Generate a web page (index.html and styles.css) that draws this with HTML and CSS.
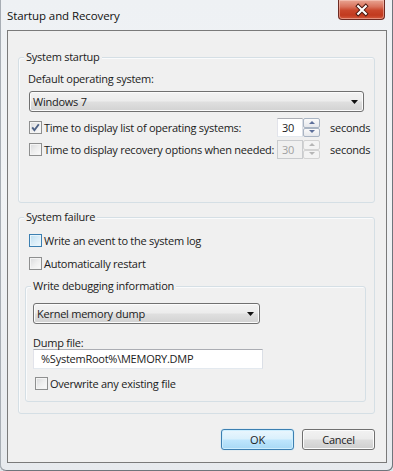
FILE: index.html
```html
<!DOCTYPE html>
<html>
<head>
<meta charset="utf-8">
<link rel="stylesheet" href="styles.css">
</head>
<body>
<div class="window">
  <div class="titlebar">
    <span class="title">Startup and Recovery</span>
    <div class="close">
      <svg width="47" height="20" viewBox="0 0 47 20">
        <path d="M20 6 L28 14 M28 6 L20 14" stroke="#4a1810" stroke-width="4.2" stroke-linecap="square" fill="none"/>
        <path d="M20 6 L28 14 M28 6 L20 14" stroke="#ffffff" stroke-width="2.2" stroke-linecap="square" fill="none"/>
      </svg>
    </div>
  </div>
  <div class="client">
    <div class="group g1">
      <span class="legend">System startup</span>
      <div class="label l-default">Default operating system:</div>
      <div class="combo c-os">
        <span>Windows 7</span>
        <svg class="arrow" width="7" height="4" viewBox="0 0 7 4"><path d="M0 0 H7 L3.5 4 Z" fill="#111"/></svg>
      </div>
      <div class="row r1">
        <div class="check-label wide">
          <span class="cb"><svg width="11" height="11" viewBox="0 0 11 11"><path d="M2.2 5.4 L4.4 8.2 L8.8 2.2" stroke="#4d6185" stroke-width="1.9" fill="none"/></svg></span>
          <span>Time to display list of operating systems:</span>
        </div>
        <div class="spin">
          <span class="spin-val">30</span>
          <span class="spin-btns"><span class="sb up"></span><span class="sb down"></span></span>
        </div>
        <span class="unit">seconds</span>
      </div>
      <div class="row r2">
        <div class="check-label wide">
          <span class="cb"></span>
          <span>Time to display recovery options when needed:</span>
        </div>
        <div class="spin disabled">
          <span class="spin-val">30</span>
          <span class="spin-btns"><span class="sb up"></span><span class="sb down"></span></span>
        </div>
        <span class="unit">seconds</span>
      </div>
    </div>

    <div class="group g2">
      <span class="legend">System failure</span>
      <div class="check-label crow c1">
        <span class="cb hover"></span>
        <span>Write an event to the system log</span>
      </div>
      <div class="check-label crow c2">
        <span class="cb"></span>
        <span>Automatically restart</span>
      </div>
      <div class="group g3">
        <span class="legend">Write debugging information</span>
        <div class="combo c-dump">
          <span>Kernel memory dump</span>
          <svg class="arrow" width="7" height="4" viewBox="0 0 7 4"><path d="M0 0 H7 L3.5 4 Z" fill="#111"/></svg>
        </div>
        <div class="label l-dump">Dump file:</div>
        <div class="textbox">%SystemRoot%\MEMORY.DMP</div>
        <div class="check-label crow c3">
          <span class="cb"></span>
          <span>Overwrite any existing file</span>
        </div>
      </div>
    </div>

    <div class="buttons">
      <div class="btn default">OK</div>
      <div class="btn">Cancel</div>
    </div>
  </div>
</div>
</body>
</html>
```

FILE: styles.css
```css
* { box-sizing: border-box; }
html, body { margin: 0; padding: 0; }
body {
  font-family: "Open Sans", "Noto Sans", sans-serif;
  font-size: 11px;
  letter-spacing: -0.25px;
  color: #1b1b1b;
  background: #dfe5ea;
}
.window {
  width: 393px;
  height: 471px;
  background: linear-gradient(180deg, #eef1f4 0%, #f1f3f5 40%, #e7eaee 100%);
  box-shadow: inset 1px 0 0 #a7adb4, inset -1px 0 0 #6f757c, inset 0 -1px 0 #6f757c;
  border-radius: 0 0 6px 6px;
  overflow: hidden;
}
.titlebar {
  height: 30px;
  display: flex;
  justify-content: space-between;
  align-items: flex-start;
}
.title {
  margin: 8px 0 0 7px;
  font-size: 11.5px;
  letter-spacing: -0.1px;
  line-height: 16px;
  color: #111;
}
.close {
  width: 47px;
  height: 20px;
  margin-right: 8px;
  border: 1px solid #6d2a22;
  border-top: none;
  border-radius: 0 0 4px 4px;
  background: linear-gradient(180deg, #e9a593 0%, #d9735d 35%, #c9462b 55%, #c23a1f 80%, #d35a3e 100%);
  box-shadow: inset 0 0 0 1px rgba(255,220,210,0.45);
  display: flex;
}
.client {
  margin-left: 7px;
  width: 380px;
  height: 433px;
  border: 1px solid #7a7a7a;
  background: #f0f0f0;
}
.group {
  border: 1px solid #d5dfe5;
  border-radius: 3px;
  box-shadow: inset 1px 1px 0 #fafbfc;
}
.legend {
  display: block;
  width: fit-content;
  margin: -8px 0 0 5px;
  padding: 0 2px;
  background: #f0f0f0;
  line-height: 14px;
  white-space: nowrap;
}
.g1 {
  margin: 26px 0 0 10px;
  width: 357px;
  height: 146px;
}
.label { line-height: 14px; white-space: nowrap; }
.l-default { margin-top: 8px; padding-left: 9px; }
.combo {
  display: flex;
  align-items: center;
  justify-content: space-between;
  height: 21px;
  border: 1px solid #707070;
  border-radius: 3px;
  background: linear-gradient(180deg, #f3f3f3 0%, #ececec 48%, #dfdfdf 52%, #d2d2d2 100%);
  box-shadow: inset 0 0 0 1px #fbfbfb;
  padding: 0 5px 0 3px;
  white-space: nowrap;
}
.c-os { margin: 5px 0 0 10px; width: 335px; }
.arrow { flex: none; }
.row {
  display: flex;
  align-items: center;
  height: 19px;
  margin-left: 10px;
}
.r1 { margin-top: 6px; }
.r2 { margin-top: 3px; }
.check-label {
  display: flex;
  align-items: center;
  gap: 2px;
  white-space: nowrap;
}
.wide { width: 248px; }
.cb {
  flex: none;
  width: 13px;
  height: 13px;
  border: 1px solid #8e8f8f;
  background: linear-gradient(135deg, #d8d9db 0%, #eeeeee 50%, #fbfbfb 100%);
  box-shadow: inset 0 0 0 1px #f4f4f4;
  display: flex;
  align-items: center;
  justify-content: center;
}
.cb.hover {
  border-color: #3c7fb1;
  background: linear-gradient(135deg, #b9dcef 0%, #d9ecf7 50%, #eef7fc 100%);
  box-shadow: inset 0 0 0 1px #e6f4fb;
}
.spin {
  display: flex;
  width: 43px;
  height: 19px;
}
.spin-val {
  width: 26px;
  height: 19px;
  background: #fff;
  border: 1px solid #abadb3;
  border-color: #abadb3 #dbdfe6 #e3e9ef #e2e3ea;
  padding-left: 4px;
  line-height: 17px;
}
.spin-btns {
  width: 17px;
  display: flex;
  flex-direction: column;
}
.sb {
  flex: 1;
  border: 1px solid #a9b4c3;
  border-radius: 2px;
  background: linear-gradient(180deg, #fafafa, #e6e8ec);
  position: relative;
}
.sb::after {
  content: "";
  position: absolute;
  left: 50%;
  top: 50%;
  margin: -2px 0 0 -3px;
  border-left: 3px solid transparent;
  border-right: 3px solid transparent;
}
.sb.up::after { border-bottom: 3px solid #5d6f9a; }
.sb.down::after { border-top: 3px solid #5d6f9a; }
.spin.disabled .spin-val {
  color: #a0a0a0;
  background: #f0f0f0;
  border-color: #c9cbce;
}
.spin.disabled .sb { border-color: #d3d3d3; background: #f3f3f3; }
.spin.disabled .sb.up::after { border-bottom-color: #b6b6b6; }
.spin.disabled .sb.down::after { border-top-color: #b6b6b6; }
.unit { margin-left: 10px; white-space: nowrap; }

.g2 {
  margin: 14px 0 0 10px;
  width: 357px;
  height: 197px;
}
.crow { height: 16px; }
.c1 { margin: 8px 0 0 10px; }
.c2 { margin: 7px 0 0 10px; }
.g3 {
  margin: 15px 0 0 6px;
  width: 341px;
  height: 116px;
}
.c-dump { margin: 10px 0 0 7px; width: 227px; }
.l-dump { margin-top: 12px; padding-left: 7px; line-height: 13px; }
.textbox {
  margin-left: 7px;
  width: 230px;
  height: 20px;
  background: #fff;
  border: 1px solid #abadb3;
  border-color: #abadb3 #dbdfe6 #e3e9ef #e2e3ea;
  padding-left: 7px;
  line-height: 18px;
  white-space: nowrap;
}
.c3 { margin: 6px 0 0 9px; }
.buttons {
  display: flex;
  justify-content: flex-end;
  gap: 8px;
  margin-top: 15px;
  padding-right: 11px;
}
.btn {
  width: 73px;
  height: 21px;
  border: 1px solid #707070;
  border-radius: 3px;
  background: linear-gradient(180deg, #f2f2f2 0%, #ebebeb 48%, #dddddd 52%, #cfcfcf 100%);
  box-shadow: inset 0 0 0 1px #fcfcfc;
  text-align: center;
  line-height: 19px;
}
.btn.default {
  border-color: #3c7fb1;
  background: linear-gradient(180deg, #eaf6fd 0%, #d9f0fc 48%, #bee6fd 52%, #a7d9f5 100%);
  box-shadow: inset 0 0 0 1px #cdeefe, 0 0 1px #7cc5f0;
}
```
